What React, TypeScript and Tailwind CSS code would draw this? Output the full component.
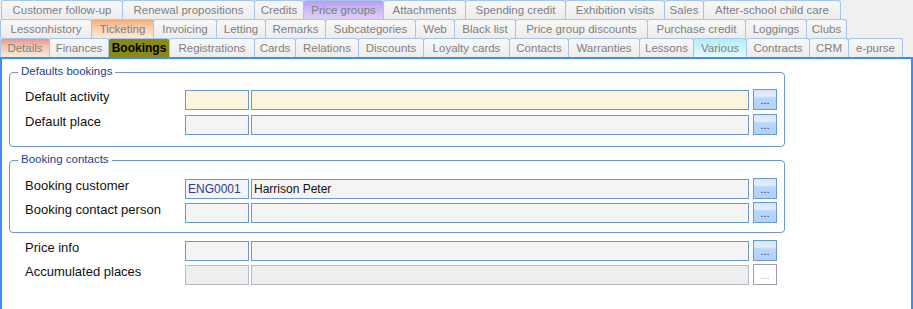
import React from 'react';

type Tab = { label: string; w: string; tone?: string };

const TONE: Record<string, string> = {
  plain: 'bg-linear-to-b from-[#f8f8f8] to-[#ececec] text-[#808080]',
  details: 'bg-linear-to-b from-[#e8958a] via-[#f1cdb8] to-[#f7ecda] text-[#808080]',
  ticketing: 'bg-linear-to-b from-[#f2ae7c] via-[#f8d2b4] to-[#fce9d9] text-[#808080]',
  pricegroups: 'bg-linear-to-b from-[#b69ef1] via-[#ccbbf3] to-[#dccff6] text-[#808080]',
  various: 'bg-linear-to-b from-[#b2eef8] to-[#e8f9fc] text-[#808080]',
  active: 'bg-[#8a8a12] text-black font-bold text-[12px]',
};

const ROW1: Tab[] = [
  { label: 'Customer follow-up', w: 'w-[122px]' },
  { label: 'Renewal propositions', w: 'w-[133px]' },
  { label: 'Credits', w: 'w-[50px]' },
  { label: 'Price groups', w: 'w-[81px]', tone: 'pricegroups' },
  { label: 'Attachments', w: 'w-[83px]' },
  { label: 'Spending credit', w: 'w-[101px]' },
  { label: 'Exhibition visits', w: 'w-[100px]' },
  { label: 'Sales', w: 'w-[40px]' },
  { label: 'After-school child care', w: 'w-[138px]' },
];

const ROW2: Tab[] = [
  { label: 'Lessonhistory', w: 'w-[92px]' },
  { label: 'Ticketing', w: 'w-[63px]', tone: 'ticketing' },
  { label: 'Invoicing', w: 'w-[64px]' },
  { label: 'Letting', w: 'w-[50px]' },
  { label: 'Remarks', w: 'w-[61px]' },
  { label: 'Subcategories', w: 'w-[91px]' },
  { label: 'Web', w: 'w-[40px]' },
  { label: 'Black list', w: 'w-[62px]' },
  { label: 'Price group discounts', w: 'w-[133px]' },
  { label: 'Purchase credit', w: 'w-[99px]' },
  { label: 'Loggings', w: 'w-[62px]' },
  { label: 'Clubs', w: 'w-[41px]' },
];

const ROW3: Tab[] = [
  { label: 'Details', w: 'w-[50px]', tone: 'details' },
  { label: 'Finances', w: 'w-[60px]' },
  { label: 'Bookings', w: 'w-[62px]', tone: 'active' },
  { label: 'Registrations', w: 'w-[86px]' },
  { label: 'Cards', w: 'w-[42px]' },
  { label: 'Relations', w: 'w-[64px]' },
  { label: 'Discounts', w: 'w-[66px]' },
  { label: 'Loyalty cards', w: 'w-[87px]' },
  { label: 'Contacts', w: 'w-[60px]' },
  { label: 'Warranties', w: 'w-[72px]' },
  { label: 'Lessons', w: 'w-[55px]' },
  { label: 'Various', w: 'w-[54px]', tone: 'various' },
  { label: 'Contracts', w: 'w-[64px]' },
  { label: 'CRM', w: 'w-[40px]' },
  { label: 'e-purse', w: 'w-[55px]' },
];

function TabRow({ tabs, className = '' }: { tabs: Tab[]; className?: string }) {
  return (
    <div className={`flex h-[19px] ${className}`}>
      {tabs.map((t, i) => (
        <div
          key={t.label}
          className={`${t.w} ${i > 0 ? '-ml-px' : ''} h-[19px] shrink-0 flex items-center justify-center whitespace-nowrap rounded-t-[3px] border border-b-0 border-[#a3c6ee] text-[11.5px] leading-[14px] ${TONE[t.tone ?? 'plain']}`}
        >
          {t.label}
        </div>
      ))}
    </div>
  );
}

type Variant = 'yellow' | 'gray' | 'disabled';

function Field({ label, code = '', name = '', variant = 'gray', className = '' }: {
  label: string;
  code?: string;
  name?: string;
  variant?: Variant;
  className?: string;
}) {
  const box =
    variant === 'yellow'
      ? 'border-[#6a98d6] bg-[#fdf6dc]'
      : variant === 'disabled'
        ? 'border-[#b3bbc7] bg-[#eeeeee]'
        : 'border-[#6a98d6] bg-[#f4f4f4]';
  const btn =
    variant === 'disabled'
      ? 'border-[#a898a8] bg-white text-[#9ab8c4]'
      : 'border-[#6a98d6] bg-[linear-gradient(to_bottom,#d8e5f7_0px,#e3edfa_6px,#b8d7fb_8px,#b2d2fa_100%)] text-[#3a1a6a]';
  return (
    <div className={`flex items-end h-[21px] ${className}`}>
      <div className="w-[160px] self-start text-[13px] leading-[15px] text-[#111]">{label}</div>
      <div className={`w-[64px] h-[20px] border ${box} pl-[2px] text-[12px] leading-[18px] text-[#2a3c9c]`}>{code}</div>
      <div className={`ml-[2px] w-[498px] h-[20px] border ${box} pl-[2px] text-[12px] leading-[18px] text-[#111]`}>{name}</div>
      <div className={`ml-[4px] w-[24px] h-[21px] border ${btn} flex justify-center pt-[5px] text-[11px] leading-[11px]`}>
        ...
      </div>
    </div>
  );
}

function GroupBox({ title, className = '', children }: { title: string; className?: string; children: React.ReactNode }) {
  return (
    <div className={`relative ml-[7px] w-[776px] rounded-[4px] border border-[#6a98d6] pl-[15px] ${className}`}>
      <span className="absolute -top-[8px] left-[8px] bg-white px-[3px] text-[11.5px] leading-[13px] text-[#23418f]">
        {title}
      </span>
      {children}
    </div>
  );
}

export default function App() {
  return (
    <div className="w-[913px] h-[309px] overflow-hidden bg-[#f0f0f0] font-['Liberation_Sans',Arial,sans-serif]">
      <TabRow tabs={ROW1} className="ml-[1px]" />
      <TabRow tabs={ROW2} />
      <TabRow tabs={ROW3} />

      {/* Bookings panel */}
      <div className="h-[252px] border-2 border-b-0 border-[#3b8ff2] bg-white">
        <GroupBox title="Defaults bookings" className="mt-[13px] h-[75px] pt-[16px]">
          <Field label="Default activity" variant="yellow" />
          <Field label="Default place" className="mt-[4px]" />
        </GroupBox>

        <GroupBox title="Booking contacts" className="mt-[13px] h-[73px] pt-[17px]">
          <Field label="Booking customer" code="ENG0001" name="Harrison Peter" />
          <Field label="Booking contact person" className="mt-[3px]" />
        </GroupBox>

        <div className="pl-[23px]">
          <Field label="Price info" className="mt-[7px]" />
          <Field label="Accumulated places" variant="disabled" className="mt-[3px]" />
        </div>
      </div>
    </div>
  );
}
